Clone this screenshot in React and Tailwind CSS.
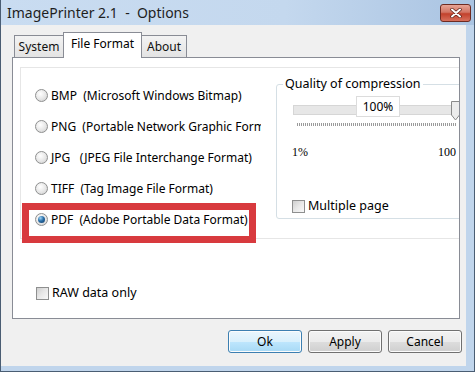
import { useState } from "react";

const formats = [
  { id: "bmp", label: "BMP  (Microsoft Windows Bitmap)" },
  { id: "png", label: "PNG  (Portable Network Graphic Format)" },
  { id: "jpg", label: "JPG   (JPEG File Interchange Format)" },
  { id: "tiff", label: "TIFF  (Tag Image File Format)" },
  { id: "pdf", label: "PDF  (Adobe Portable Data Format)" },
];

function RadioDot({ checked }) {
  return (
    <span className="flex h-[13px] w-[13px] shrink-0 items-center justify-center rounded-full border border-[#8e8f8f] bg-[radial-gradient(circle_at_40%_35%,#ffffff_0%,#e6e6e6_55%,#c9c9c9_100%)]">
      {checked && (
        <span className="h-[7px] w-[7px] rounded-full bg-[radial-gradient(circle_at_35%_30%,#9fd4f6_0%,#2a6fa8_45%,#0d3560_100%)]" />
      )}
    </span>
  );
}

function CheckBox() {
  return (
    <span className="h-[13px] w-[13px] shrink-0 border border-[#8e8f8f] bg-[linear-gradient(135deg,#cfcfcf_0%,#e8e8e8_50%,#f8f8f8_100%)]" />
  );
}

function Button({ children, primary }) {
  return (
    <button
      className={
        primary
          ? "h-[23px] w-[74px] rounded-[3px] border border-[#3c7fb1] bg-[linear-gradient(#eaf6fd_0%,#d9f0fc_50%,#bee6fd_51%,#a7d9f5_100%)] text-[12px] text-black shadow-[inset_0_0_0_1px_#fcfcfc]"
          : "h-[23px] w-[74px] rounded-[3px] border border-[#707070] bg-[linear-gradient(#f2f2f2_0%,#ebebeb_50%,#dddddd_51%,#cfcfcf_100%)] text-[12px] text-black shadow-[inset_0_0_0_1px_#fbfbfb]"
      }
    >
      {children}
    </button>
  );
}

export default function App() {
  const [format, setFormat] = useState("pdf");

  return (
    <div className="flex h-[372px] w-[475px] flex-col overflow-hidden border-l border-r border-b border-[#4a5d73] bg-[#c0d5ec] font-['Noto_Sans',sans-serif] text-black">
      {/* title bar */}
      <div className="flex h-[25px] shrink-0 items-center justify-between bg-[linear-gradient(90deg,#c9dcf1_0%,#c4d8ee_60%,#aac4e2_100%)] pl-[6px] pr-[3px]">
        <span className="whitespace-pre text-[14px] leading-none text-[#1e1e1e]">ImagePrinter 2.1  -  Options</span>
        <span className="mt-[1px] flex h-[18px] w-[31px] items-center justify-center rounded-[3px] border border-[#6e2b22] bg-[linear-gradient(#e8a496_0%,#d27564_45%,#c2412c_55%,#d7705c_100%)]">
          <svg width="12" height="10" viewBox="0 0 12 10">
            <path d="M2 1.5 L10 8.5 M10 1.5 L2 8.5" stroke="#5a1e16" strokeWidth="3.4" strokeLinecap="round" />
            <path d="M2 1.5 L10 8.5 M10 1.5 L2 8.5" stroke="#ffffff" strokeWidth="2" strokeLinecap="round" />
          </svg>
        </span>
      </div>

      {/* client area */}
      <div className="mr-[8px] flex h-[341px] w-[465px] flex-col bg-[#f0f0f0] text-[12px]">
        {/* tabs */}
        <div className="ml-[13px] mt-[7px] flex h-[25px] items-end">
          <div className="flex h-[22px] w-[50px] items-center justify-center border border-b-0 border-[#898c95] bg-[linear-gradient(#f3f3f3,#e3e3e3)] text-[#111]">
            System
          </div>
          <div className="relative z-10 mb-[-1px] ml-[-1px] flex h-[26px] w-[79px] items-start justify-center border border-b-0 border-[#898c95] bg-white pt-[2px]">
            File Format
          </div>
          <div className="ml-[-1px] flex h-[22px] w-[46px] items-center justify-center border border-b-0 border-[#898c95] bg-[linear-gradient(#f3f3f3,#e3e3e3)] text-[#111]">
            About
          </div>
        </div>

        {/* tab panel */}
        <div className="relative ml-[11px] h-[262px] w-[448px] overflow-hidden border border-[#898c95] bg-white">
          <div className="ml-[7px] mt-[9px] flex h-[172px] w-[470px] border border-[#e6e6e6]">
            <div className="w-[255px] shrink-0 pl-[14px] pt-[12px]">
              {formats.map((f) => (
                <label
                  key={f.id}
                  onClick={() => setFormat(f.id)}
                  className="flex h-[31px] w-[226px] items-center gap-[3px] overflow-hidden whitespace-pre"
                >
                  <RadioDot checked={format === f.id} />
                  <span>{f.label}</span>
                </label>
              ))}
            </div>

            <div className="relative mt-[16px] h-[135px] w-[200px] shrink-0 rounded-[3px] border border-[#d5dfe5]">
              <span className="absolute left-[6px] top-[-10px] bg-white px-[2px] text-[12.5px] leading-[18px]">
                Quality of compression
              </span>
              <div className="pl-[15px]">
                <div className="ml-[1px] mt-[20px] h-[10px] w-[200px] border border-[#d6d6d6] bg-[#e7e7e7]" />
                <div className="ml-[5px] mt-[8px] h-[3px] w-[160px] bg-[repeating-linear-gradient(90deg,#9a9a9a_0_1px,transparent_1px_2px)]" />
                <div className="mt-[18px] flex w-[164px] justify-between font-['Liberation_Serif',serif] text-[12px] leading-[16px]">
                  <span>1%</span>
                  <span>100</span>
                </div>
                <div className="mt-[38px] flex h-[16px] items-center gap-[3px]">
                  <CheckBox />
                  <span className="text-[12.5px]">Multiple page</span>
                </div>
              </div>
              <div className="absolute left-[79px] top-[11px] flex h-[21px] w-[44px] items-center justify-center border border-[#dcdcdc] bg-white">
                100%
              </div>
              <svg className="absolute left-[174px] top-[16px]" width="9" height="20" viewBox="0 0 9 20">
                <path d="M0.5 0.5 H8.5 V14 L4.5 19 L0.5 14 Z" fill="#ececec" stroke="#8a8a8a" />
              </svg>
            </div>
          </div>

          <div className="ml-[23px] mt-[46px] flex h-[16px] items-center gap-[3px]">
            <CheckBox />
            <span className="text-[12.5px]">RAW data only</span>
          </div>

          {/* highlight annotation */}
          <div className="pointer-events-none absolute left-[9px] top-[145px] h-[40px] w-[234px] border-[7px] border-[#d83a3e]" />
        </div>

        {/* buttons */}
        <div className="mt-[11px] flex justify-end gap-[6px] pr-[4px]">
          <Button primary>Ok</Button>
          <Button>Apply</Button>
          <Button>Cancel</Button>
        </div>
      </div>
    </div>
  );
}
